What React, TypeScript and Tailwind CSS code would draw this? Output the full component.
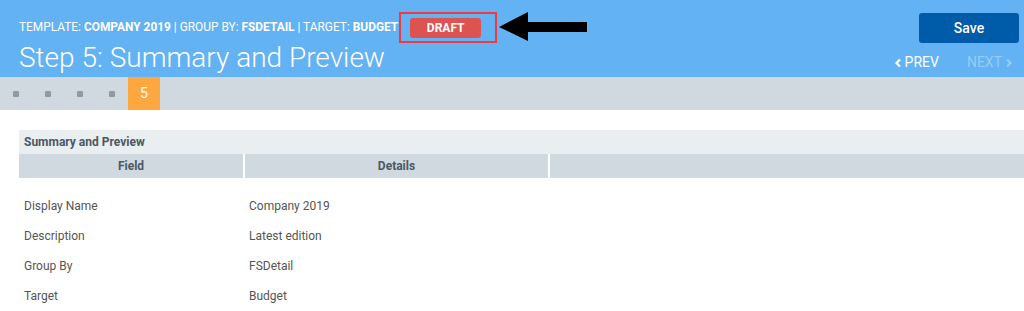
import React from 'react';

const rows = [
    { field: 'Display Name', details: 'Company 2019' },
    { field: 'Description', details: 'Latest edition' },
    { field: 'Group By', details: 'FSDetail' },
    { field: 'Target', details: 'Budget' },
];

export default function App() {
    return (
        <div className="min-h-screen bg-white font-['Roboto',sans-serif]">
            {/* Header */}
            <div className="h-[77px] bg-[#63b2f3] flex justify-between pl-[19px] pr-[5px]">
                <div className="flex flex-col">
                    <div className="mt-[12px] h-[31px] flex items-center text-[11.9px] text-white uppercase">
                        <span>
                            Template: <b className="font-bold">Company 2019</b> | Group by: <b className="font-bold">FSDetail</b> | Target: <b className="font-bold">Budget</b>
                        </span>
                        <div className="ml-[1px] w-[98px] h-[31px] border-2 border-[#ef3b3f] flex items-center pl-[9px]">
                            <span className="w-[71px] h-[20px] rounded-[3px] bg-[#dc5350] text-white text-[12px] font-bold flex items-center justify-center">
                                DRAFT
                            </span>
                        </div>
                        <svg width="90" height="31" viewBox="0 0 90 31" className="ml-[1px]">
                            <polygon points="1,15 30,0 30,29" fill="#000" />
                            <rect x="29" y="10" width="60" height="10" fill="#000" />
                        </svg>
                    </div>
                    <h1 className="mt-[-1px] text-[28px] font-light text-white leading-[32px]">Step 5: Summary and Preview</h1>
                </div>
                <div className="flex flex-col items-end">
                    <button className="mt-[13px] w-[100px] h-[30px] rounded-[3px] bg-[#005ca8] text-white text-[14px] font-medium">
                        Save
                    </button>
                    <div className="mt-[9px] flex items-center gap-[28px] text-[14px] pr-[6px]">
                        <span className="flex items-center gap-[3px] text-white">
                            <svg width="8" height="10" viewBox="0 0 8 10"><path d="M6 1.5 2.5 5 6 8.5" stroke="currentColor" strokeWidth="2.2" fill="none" /></svg>
                            PREV
                        </span>
                        <span className="flex items-center gap-[3px] text-[#93cdf4]">
                            NEXT
                            <svg width="8" height="10" viewBox="0 0 8 10"><path d="M2 1.5 5.5 5 2 8.5" stroke="currentColor" strokeWidth="2.2" fill="none" /></svg>
                        </span>
                    </div>
                </div>
            </div>

            {/* Steps */}
            <div className="h-[33px] bg-[#d0d9df] flex">
                {[1, 2, 3, 4].map((n) => (
                    <div key={n} className="w-[32px] flex items-center justify-center">
                        <span className="w-[6px] h-[6px] rounded-[1px] bg-[#8b9ca6]" />
                    </div>
                ))}
                <div className="w-[32px] bg-[#fca73f] text-white text-[14px] flex items-center justify-center">5</div>
            </div>

            {/* Table */}
            <div className="pt-[20px] pl-[19px]">
                <div className="h-[24px] bg-[#e9eef1] flex items-center pl-[5px] text-[12px] font-bold text-[#4b5863]">
                    Summary and Preview
                </div>
                <div className="h-[24px] flex gap-[2px] text-[12px] font-bold text-[#4b5863]">
                    <div className="w-[224px] bg-[#d0d9df] flex items-center justify-center">Field</div>
                    <div className="w-[303px] bg-[#d0d9df] flex items-center justify-center">Details</div>
                    <div className="flex-1 bg-[#d0d9df]" />
                </div>
                <div className="pt-[13px]">
                    {rows.map((r) => (
                        <div key={r.field} className="h-[30px] flex items-center text-[12px] text-[#555]">
                            <div className="w-[230px] pl-[5px]">{r.field}</div>
                            <div>{r.details}</div>
                        </div>
                    ))}
                </div>
            </div>
        </div>
    );
}
